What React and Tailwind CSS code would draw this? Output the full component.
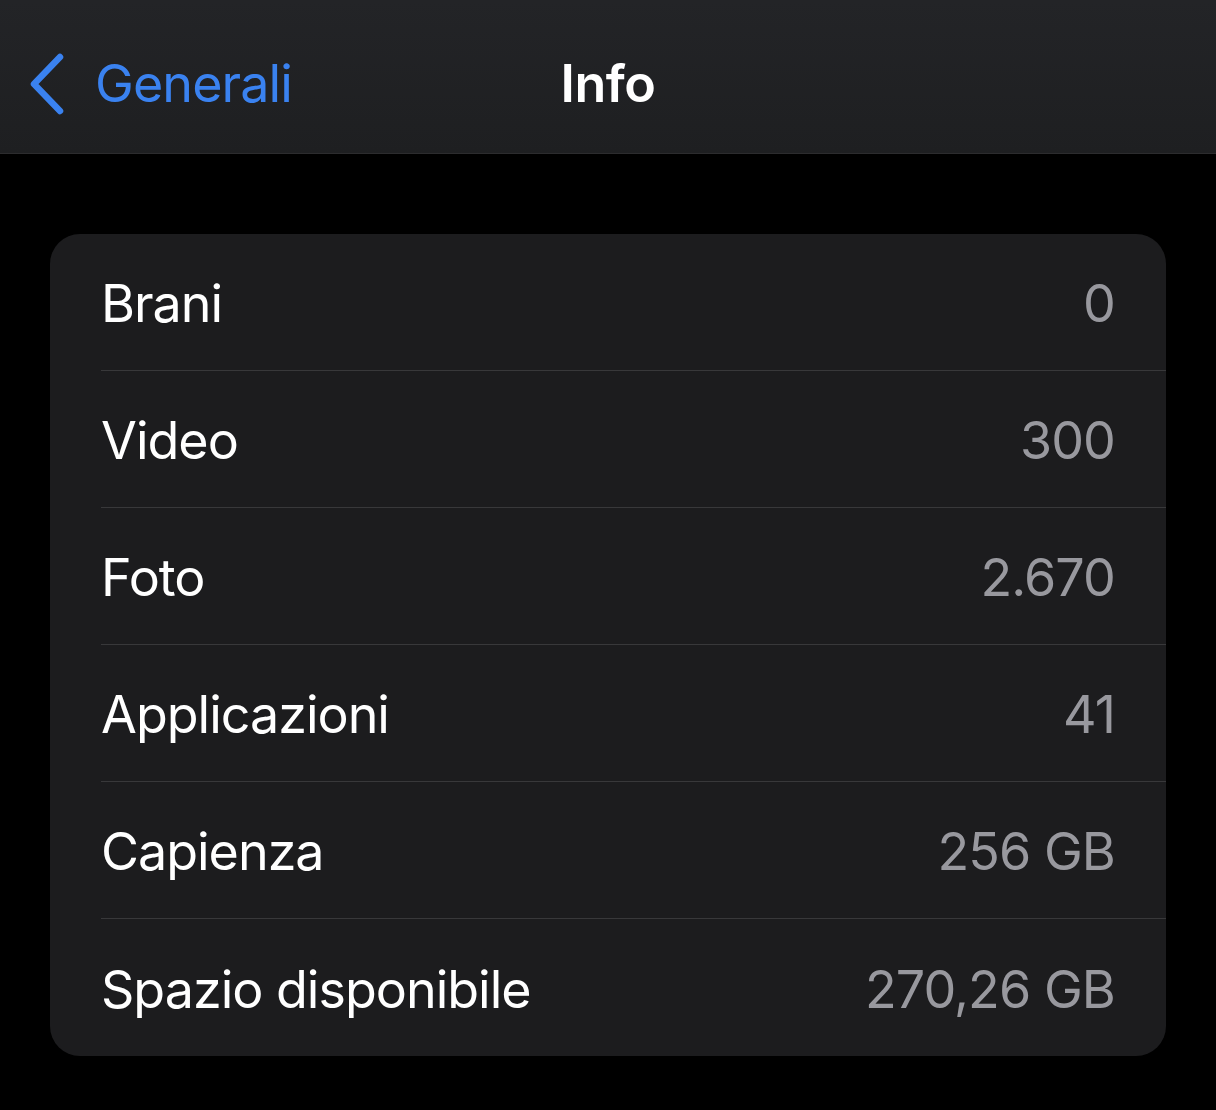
import React from 'react';

// Rows of the "Info" settings group
const rows = [
  { label: 'Brani', value: '0' },
  { label: 'Video', value: '300' },
  { label: 'Foto', value: '2.670' },
  { label: 'Applicazioni', value: '41' },
  { label: 'Capienza', value: '256 GB' },
  { label: 'Spazio disponibile', value: '270,26 GB' },
];

const BackChevron = () => (
  <svg width="40" height="62" viewBox="0 0 40 62" fill="none">
    <path d="M33 4 L7 31 L33 58" stroke="#3a82f0" strokeWidth="6.5" strokeLinecap="round" strokeLinejoin="round" />
  </svg>
);

const Row = ({ label, value, last }) => (
  <div className="pl-[51px]">
    <div className={`h-[137px] flex items-center justify-between pr-[51px] pt-[4px] ${last ? '' : 'border-b border-[#38383a]'}`}>
      <span className="text-[52px] text-white tracking-[-1px]">{label}</span>
      <span className="text-[52px] text-[#98989e] tracking-[-0.9px]">{value}</span>
    </div>
  </div>
);

export default function App() {
  return (
    <div className="w-[1216px] h-[1110px] bg-black overflow-hidden" style={{ fontFamily: 'Inter, "Noto Sans", sans-serif' }}>
      {/* Nav bar */}
      <header className="h-[154px] bg-gradient-to-b from-[#232427] to-[#1e1f21] border-b border-[#2c2c2e] relative flex items-center">
        <div className="flex items-center pl-[27px] pt-[14px] gap-[28px]">
          <BackChevron />
          <span className="text-[52px] text-[#3a82f0] tracking-[-0.9px]">Generali</span>
        </div>
        <div className="absolute inset-x-0 top-0 bottom-0 pt-[14px] flex items-center justify-center">
          <span className="text-[52px] font-semibold text-white tracking-[-0.5px]">Info</span>
        </div>
      </header>

      {/* Group */}
      <div className="pt-[80px] px-[50px]">
        <div className="bg-[#1c1c1e] rounded-[30px] overflow-hidden">
          {rows.map((r, i) => (
            <Row key={r.label} {...r} last={i === rows.length - 1} />
          ))}
        </div>
      </div>
    </div>
  );
}
